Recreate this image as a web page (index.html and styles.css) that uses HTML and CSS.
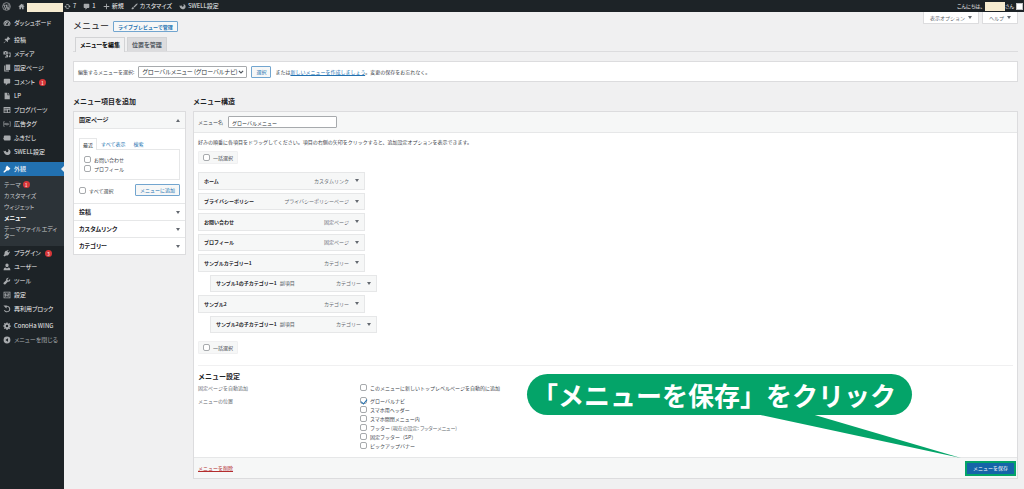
FILE: index.html
```html
<!DOCTYPE html>
<html lang="ja">
<head>
<meta charset="utf-8">
<title>メニュー</title>
<meta name="viewport" content="width=device-width, initial-scale=1">
<link rel="stylesheet" href="styles.css">
</head>
<body>
<svg class="sprite" aria-hidden="true">
  <symbol id="i-wp" viewBox="0 0 20 20"><circle cx="10" cy="10" r="8.6" fill="none" stroke="currentColor" stroke-width="1.6"/><path d="M3.5 7h4M8.500 7h4M4.500 7l3.500 9.500L10.200 10 9 7M10 7l3.500 9.500L16 9.500c.4-1.500-1.500-2.500-1.200-4.300" fill="none" stroke="currentColor" stroke-width="1.900"/></symbol>
  <symbol id="i-home" viewBox="0 0 20 20"><path d="M10 2L1.500 10l1.300 1.300L4 10.200V18h4.500v-5h3v5H16v-7.800l1.200 1.100L18.500 10 15.500 7.200V3.500h-2v1.800z"/></symbol>
  <symbol id="i-update" viewBox="0 0 20 20"><path d="M4.500 11a5.700 5.700 0 0 0 10 2.700M15.500 9a5.700 5.700 0 0 0-10-2.700" fill="none" stroke="currentColor" stroke-width="2.400"/><path d="M1 11.500L4.300 7l3.700 4.500zM19 8.500L15.700 13 12 8.500z"/></symbol>
  <symbol id="i-comment" viewBox="0 0 20 20"><path d="M4 2h12a2 2 0 0 1 2 2v8a2 2 0 0 1-2 2h-4l-5 5v-5H4a2 2 0 0 1-2-2V4a2 2 0 0 1 2-2z"/></symbol>
  <symbol id="i-plus" viewBox="0 0 20 20"><path d="M8.700 2h2.600v6.700H18v2.600h-6.700V18H8.700v-6.700H2V8.700h6.700z"/></symbol>
  <symbol id="i-brush" viewBox="0 0 20 20"><path d="M18.500 1.500c-1-1-2.500 0-4 1.500L7 10.500l2.500 2.500L17 5.500c1.500-1.500 2.500-3 1.500-4zM6 11.500c-3 0-2.500 3.500-5 5.500 3 1.500 7 .5 7.500-3z"/></symbol>
  <symbol id="i-swell" viewBox="0 0 20 20"><path d="M1 7c3 1.500 5 1 6-1 0 3 2 5 4 4.500C14.500 9.500 14 5 12.500 2.500 17.500 3.500 20 8 18.500 12.500 17 17 12 19 8 17 4.500 15.500 2 11.500 1 7z"/></symbol>
  <symbol id="i-dash" viewBox="0 0 20 20"><path fill-rule="evenodd" d="M10 3a8.500 8.500 0 0 0-7.500 12.800c.2.700.8 1.200 1.500 1.200h12c.7 0 1.300-.5 1.500-1.200A8.500 8.500 0 0 0 10 3zM9 5h2v2H9zM4.500 7.500h2v2h-2zM3.500 11.500h2v2h-2zM14.500 11.500h2v2h-2zM14 6l1.200 1.200L12 12a2.200 2.200 0 1 1-2.500-1.200z"/></symbol>
  <symbol id="i-pin" viewBox="0 0 20 20"><path d="M12.500 1.500l6 6-1.500 1-1.500-.3-3.300 3.300c.5 1.700.3 3-.7 4.200L7.900 12.100 2.500 18l-1-1 5.900-5.400-3.600-3.600c1.200-1 2.500-1.200 4.200-.7L11.300 4 11 2.500z"/></symbol>
  <symbol id="i-media" viewBox="0 0 20 20"><path fill-rule="evenodd" d="M1 4h3l1-1.500h3L9 4h3v7H1zm5.500 1.500a2 2 0 1 0 0 4 2 2 0 0 0 0-4zM13.500 6H19v10a2.300 2.300 0 1 1-2-2.300V9h-3.500zM8 12.500h4.500V17a2 2 0 1 1-1.700-2H9.500v2.500A2 2 0 1 1 8 15.600z"/></symbol>
  <symbol id="i-pages" viewBox="0 0 20 20"><path d="M7 1.500h11V15H7zM5.500 4v12.500H15V18.500H3V4z"/></symbol>
  <symbol id="i-doc" viewBox="0 0 20 20"><path d="M4 2h7v6h6v10H4zM12.500 2L17 6.500h-4.500z"/></symbol>
  <symbol id="i-blocks" viewBox="0 0 20 20"><path fill-rule="evenodd" d="M1.500 2.500h17v15h-17zM3.500 6v1.800h13V6zM3.500 9.500v2h7v-2zM12.500 9.500v6h4v-6zM3.500 13v2.500h7V13z"/></symbol>
  <symbol id="i-ad" viewBox="0 0 24 20"><path d="M5 3H2v14h3M19 3h3v14h-3M5 13V8h3v5M10 13V8h4v5h-4M17 8v5" fill="none" stroke="currentColor" stroke-width="1.700"/></symbol>
  <symbol id="i-balloon" viewBox="0 0 20 20"><path d="M4.500 4h12A2.500 2.500 0 0 1 19 6.500v7a2.500 2.500 0 0 1-2.500 2.500h-12A2.500 2.500 0 0 1 2 13.500L.5 11 2 9V6.500A2.500 2.500 0 0 1 4.500 4z"/></symbol>
  <symbol id="i-paint" viewBox="0 0 20 20"><path d="M10 1.500l8.500 7.500-3.800 4.200c-2 1-3.700.3-5 .3L4 18.500c-1.500 1-3.500-1-2.500-2.500L7 10.500c0-1.500-1-3 .2-5z"/></symbol>
  <symbol id="i-plug" viewBox="0 0 20 20"><path d="M12.500 2l1.500 1.500-3 3L13.500 9l3-3L18 7.500l-3 3 1 1c-2.500 4-5.500 5.500-8.500 4.500L4 19l-3-3 3-3.500C3 9.500 4.500 6.500 8.500 4l1 1z"/></symbol>
  <symbol id="i-user" viewBox="0 0 20 20"><path d="M10 1.500a4 4 0 0 1 4 4.500c-.3 2.500-2 4-4 4S6.300 8.500 6 6a4 4 0 0 1 4-4.500zM6 11l4 3 4-3c3 .5 4.500 3 4.500 7h-17c0-4 1.500-6.500 4.500-7z"/></symbol>
  <symbol id="i-tool" viewBox="0 0 20 20"><path d="M17.500 5L14 8.500l-2.500-.5L11 5.500 14.500 2C11 .5 7 3.500 8 8l-6.500 6.500c-1.500 2.500 1.500 5.500 4 4L12 12c4.500 1 7.500-3.500 5.500-7z"/></symbol>
  <symbol id="i-settings" viewBox="0 0 20 20"><path fill-rule="evenodd" d="M1.500 2h17v16h-17zM3.500 4v12h13V4zM5 5.500h2v3h1.500v2H7v4H5v-4H4v-2h1zM9.500 5.500h1.700v5h1v2h-1v2H9.500v-2h-1v-2h1zM13.500 5.500h1.500V7h1v2h-1v5.500h-1.500V9h-1V7h1z"/></symbol>
  <symbol id="i-reuse" viewBox="0 0 20 20"><path d="M5 5a7 7 0 1 1-1.500 8" fill="none" stroke="currentColor" stroke-width="2.600"/><path d="M1 1.500h8V9z"/></symbol>
  <symbol id="i-gear" viewBox="0 0 20 20"><path fill-rule="evenodd" d="M8.500 1h3l.5 2.500 1.500.7 2.200-1.400 2 2-1.400 2.200.7 1.500 2.500.5v3l-2.500.5-.7 1.500 1.400 2.200-2 2-2.200-1.400-1.500.7-.5 2.500h-3L8 17l-1.500-.7-2.200 1.400-2-2 1.400-2.200L3 12l-2.500-.5v-3L3 8l.7-1.500-1.400-2.200 2-2 2.200 1.400L8 3zM10 7a3 3 0 1 0 0 6 3 3 0 0 0 0-6z"/></symbol>
  <symbol id="i-collapse" viewBox="0 0 20 20"><path fill-rule="evenodd" d="M10 1.500a8.500 8.500 0 1 0 0 17 8.500 8.500 0 0 0 0-17zM12.500 5.500v9L6 10z"/></symbol>
  <symbol id="i-chevron" viewBox="0 0 10 10"><path d="M1.500 3L5 6.500 8.500 3" fill="none" stroke="currentColor" stroke-width="2"/></symbol>
</svg>

<header class="adminbar">
  <a class="bar-item" href="#" aria-label="WordPress"><svg class="icon icon-wp"><use href="#i-wp"/></svg></a>
  <a class="bar-item bar-site" href="#" aria-label="サイト"><svg class="icon"><use href="#i-home"/></svg><span class="mask mask-site"></span></a>
  <a class="bar-item" href="#"><svg class="icon"><use href="#i-update"/></svg>7</a>
  <a class="bar-item" href="#"><svg class="icon"><use href="#i-comment"/></svg>1</a>
  <a class="bar-item" href="#"><svg class="icon"><use href="#i-plus"/></svg>新規</a>
  <a class="bar-item" href="#"><svg class="icon"><use href="#i-brush"/></svg>カスタマイズ</a>
  <a class="bar-item" href="#"><svg class="icon"><use href="#i-swell"/></svg>SWELL設定</a>
  <a class="bar-user" href="#">こんにちは、<span class="mask mask-user"></span>さん<span class="avatar"></span></a>
</header>

<div class="layout">
  <nav class="sidebar" aria-label="管理メニュー">
    <ul class="menu">
      <li><a href="#"><svg class="icon"><use href="#i-dash"/></svg>ダッシュボード</a></li>
      <li class="sep"></li>
      <li><a href="#"><svg class="icon"><use href="#i-pin"/></svg>投稿</a></li>
      <li><a href="#"><svg class="icon"><use href="#i-media"/></svg>メディア</a></li>
      <li><a href="#"><svg class="icon"><use href="#i-pages"/></svg>固定ページ</a></li>
      <li><a href="#"><svg class="icon"><use href="#i-comment"/></svg>コメント<span class="count">1</span></a></li>
      <li><a href="#"><svg class="icon"><use href="#i-doc"/></svg>LP</a></li>
      <li><a href="#"><svg class="icon"><use href="#i-blocks"/></svg>ブログパーツ</a></li>
      <li><a href="#"><svg class="icon"><use href="#i-ad"/></svg>広告タグ</a></li>
      <li><a href="#"><svg class="icon"><use href="#i-balloon"/></svg>ふきだし</a></li>
      <li><a href="#"><svg class="icon"><use href="#i-swell"/></svg>SWELL設定</a></li>
      <li class="sep"></li>
      <li class="current"><a href="#"><svg class="icon"><use href="#i-paint"/></svg>外観</a>
        <ul class="submenu">
          <li><a href="#">テーマ<span class="count">1</span></a></li>
          <li><a href="#">カスタマイズ</a></li>
          <li><a href="#">ウィジェット</a></li>
          <li><a class="active" href="#">メニュー</a></li>
          <li><a href="#">テーマファイルエディター</a></li>
        </ul>
      </li>
      <li><a href="#"><svg class="icon"><use href="#i-plug"/></svg>プラグイン<span class="count">3</span></a></li>
      <li><a href="#"><svg class="icon"><use href="#i-user"/></svg>ユーザー</a></li>
      <li><a href="#"><svg class="icon"><use href="#i-tool"/></svg>ツール</a></li>
      <li><a href="#"><svg class="icon"><use href="#i-settings"/></svg>設定</a></li>
      <li><a href="#"><svg class="icon"><use href="#i-reuse"/></svg>再利用ブロック</a></li>
      <li class="sep"></li>
      <li><a href="#"><svg class="icon"><use href="#i-gear"/></svg>ConoHa WING</a></li>
      <li><button class="collapse" type="button"><svg class="icon"><use href="#i-collapse"/></svg>メニューを閉じる</button></li>
    </ul>
  </nav>

  <main class="content">
    <div class="page-head">
      <h1 class="title">メニュー</h1>
      <a class="btn btn-title" href="#">ライブプレビューで管理</a>
      <div class="screen-meta">
        <button class="meta-btn" type="button">表示オプション<span class="tri"></span></button>
        <button class="meta-btn" type="button">ヘルプ<span class="tri"></span></button>
      </div>
    </div>
    <nav class="tabs" aria-label="メニュータブ">
      <a class="tab tab-active" href="#">メニューを編集</a>
      <a class="tab" href="#">位置を管理</a>
    </nav>

    <form class="manage">
      <label for="menu-select">編集するメニューを選択:</label>
      <span class="select-wrap">
        <select class="field menu-select" id="menu-select"><option>グローバルメニュー (グローバルナビ)</option></select>
        <svg class="chevron" aria-hidden="true"><use href="#i-chevron"/></svg>
      </span>
      <button class="btn" type="button">選択</button>
      <span class="manage-note">または<a class="link" href="#">新しいメニューを作成しましょう</a>。変更の保存をお忘れなく。</span>
    </form>

    <div class="columns">
      <section class="col-left">
        <h2 class="heading">メニュー項目を追加</h2>
        <div class="accordion">
          <h3 class="acc-title acc-open">固定ページ<span class="tri tri-up"></span></h3>
          <div class="acc-body">
            <div class="mini-tabs">
              <a class="mini-tab mini-active" href="#">最近</a>
              <a class="mini-tab" href="#">すべて表示</a>
              <a class="mini-tab" href="#">検索</a>
            </div>
            <div class="mini-panel">
              <label class="check"><input type="checkbox">お問い合わせ</label>
              <label class="check"><input type="checkbox">プロフィール</label>
            </div>
            <div class="acc-actions">
              <label class="check"><input type="checkbox">すべて選択</label>
              <button class="btn btn-add" type="button">メニューに追加</button>
            </div>
          </div>
          <h3 class="acc-title">投稿<span class="tri"></span></h3>
          <h3 class="acc-title">カスタムリンク<span class="tri"></span></h3>
          <h3 class="acc-title">カテゴリー<span class="tri"></span></h3>
        </div>
      </section>

      <section class="col-right">
        <h2 class="heading">メニュー構造</h2>
        <form class="frame">
          <div class="frame-head">
            <label for="menu-name">メニュー名</label>
            <input class="field menu-name" id="menu-name" type="text" value="グローバルメニュー">
          </div>
          <div class="frame-body">
            <p class="hint">好みの順番に各項目をドラッグしてください。項目の右側の矢印をクリックすると、追加設定オプションを表示できます。</p>
            <label class="check bulk"><input type="checkbox">一括選択</label>
            <ul class="items">
              <li class="item"><b>ホーム</b><span class="kind">カスタムリンク</span><span class="tri"></span></li>
              <li class="item"><b>プライバシーポリシー</b><span class="kind">プライバシーポリシーページ</span><span class="tri"></span></li>
              <li class="item"><b>お問い合わせ</b><span class="kind">固定ページ</span><span class="tri"></span></li>
              <li class="item"><b>プロフィール</b><span class="kind">固定ページ</span><span class="tri"></span></li>
              <li class="item"><b>サンプルカテゴリー1</b><span class="kind">カテゴリー</span><span class="tri"></span></li>
              <li class="item item-child"><b>サンプル1の子カテゴリー1</b><span class="sub">副項目</span><span class="kind">カテゴリー</span><span class="tri"></span></li>
              <li class="item"><b>サンプル2</b><span class="kind">カテゴリー</span><span class="tri"></span></li>
              <li class="item item-child"><b>サンプル2の子カテゴリー1</b><span class="sub">副項目</span><span class="kind">カテゴリー</span><span class="tri"></span></li>
            </ul>
            <label class="check bulk"><input type="checkbox">一括選択</label>
            <div class="settings">
              <h3 class="heading">メニュー設定</h3>
              <div class="setting">
                <span class="setting-name">固定ページを自動追加</span>
                <div class="options">
                  <label class="check"><input type="checkbox">このメニューに新しいトップレベルページを自動的に追加</label>
                </div>
              </div>
              <div class="setting">
                <span class="setting-name">メニューの位置</span>
                <div class="options">
                  <label class="check"><input type="checkbox" checked>グローバルナビ</label>
                  <label class="check"><input type="checkbox">スマホ用ヘッダー</label>
                  <label class="check"><input type="checkbox">スマホ開閉メニュー内</label>
                  <label class="check"><input type="checkbox">フッター<small class="note">(現在の設定: フッターメニュー)</small></label>
                  <label class="check"><input type="checkbox">固定フッター（SP）</label>
                  <label class="check"><input type="checkbox">ピックアップバナー</label>
                </div>
              </div>
            </div>
          </div>
          <div class="frame-foot">
            <a class="delete" href="#">メニューを削除</a>
            <div class="save-wrap">
              <button class="save" type="button">メニューを保存</button>
              <div class="callout">
                <p class="callout-text">「メニューを保存」をクリック</p>
                <svg class="callout-tail" viewBox="0 0 210 45" aria-hidden="true"><path d="M0 0h57L210 45z"/></svg>
              </div>
            </div>
          </div>
        </form>
      </section>
    </div>
  </main>
</div>
</body>
</html>
```
FILE: styles.css
```css
* { box-sizing: border-box; }

body {
  margin: 0;
  min-height: 100vh;
  display: flex;
  flex-direction: column;
  background: #f0f0f1;
  color: #3c434a;
  font: 5px/8px "Noto Sans CJK JP", sans-serif;
}

h1, h2, h3, p, ul { margin: 0; padding: 0; }
ul { list-style: none; }
a { color: inherit; text-decoration: none; }
button, input, select { font: inherit; color: inherit; margin: 0; }

.sprite { position: absolute; width: 0; height: 0; }
.icon { width: 8px; height: 8px; flex: none; fill: currentColor; }

/* Slightly larger interface text with proportional kana */
.adminbar, .sidebar, .collapse, .tab, .menu-select, .acc-title {
  font-size: 6px;
  font-feature-settings: "palt";
}

/* Admin bar */
.adminbar {
  display: flex;
  align-items: center;
  gap: 7px;
  height: 12px;
  padding: 0 1px 0 2px;
  background: #1d2327;
  color: #f0f0f1;
}
.adminbar .icon { width: 7px; height: 7px; color: #a7aaad; }
.adminbar .icon-wp { width: 9px; height: 9px; }
.bar-item { display: flex; align-items: center; gap: 2px; }
.bar-site { margin-right: -6px; }
.mask { background: #f6ebd0; }
.mask-site { width: 36px; height: 9px; margin-top: 3px; }
.bar-user { display: flex; align-items: center; margin-left: auto; font-size: 5px; }
.mask-user { width: 20px; height: 9px; margin-left: 2px; }
.avatar { width: 7px; height: 7px; margin-left: 2px; background: #fff; border: 1px solid #c3c4c7; }

/* Sidebar */
.layout { display: flex; flex: 1; }
.sidebar { width: 64px; flex: none; padding-top: 4px; background: #1d2327; color: #f0f0f1; }
.menu > li > a, .collapse {
  display: flex;
  align-items: center;
  gap: 3px;
  width: 100%;
  height: 14px;
  padding: 0 3px;
  white-space: nowrap;
}
.menu .icon { color: #a7aaad; }
.menu .sep { height: 3px; }
.collapse { border: 0; background: none; color: #a7aaad; }
.menu .current > a { background: #2271b1; color: #fff; }
.current > a .icon { color: #fff; }
.current > a::after {
  content: "";
  margin: 0 -3px 0 auto;
  border: 3px solid transparent;
  border-right-color: #f0f0f1;
}
.submenu { padding: 3px 4px 5px; background: #2c3338; color: #c3c4c7; }
.submenu a { display: flex; align-items: center; padding: 2px 0; line-height: 7px; }
.submenu .active { color: #fff; font-weight: 700; }
.count {
  width: 7px;
  height: 7px;
  margin-left: 1px;
  border-radius: 50%;
  background: #d63638;
  color: #fff;
  font-size: 5px;
  line-height: 7px;
  text-align: center;
}
.submenu .count { margin: 0 0 0 2px; }

/* Page header */
.content { flex: 1; min-width: 0; padding: 0 6px 10px 9px; }
.page-head { display: flex; align-items: center; gap: 4px; height: 25px; padding-top: 3px; }
.title { font-size: 9px; line-height: 12px; font-weight: 400; color: #1d2327; }
.btn {
  height: 12px;
  padding: 0 4px;
  border: 1px solid #72a5cf;
  border-radius: 1px;
  background: #f6f7f7;
  color: #2271b1;
  line-height: 10px;
  white-space: nowrap;
}
.btn-title { height: 11px; line-height: 9px; font-weight: 700; }
.screen-meta { display: flex; align-self: flex-start; gap: 3px; margin: -3px 0 0 auto; }
.meta-btn {
  display: flex;
  align-items: center;
  gap: 3px;
  height: 12px;
  padding: 0 6px;
  border: 1px solid #dcdcde;
  border-top: 0;
  border-radius: 0 0 1px 1px;
  background: #fff;
  color: #646970;
}
.tri { flex: none; border: 2px solid transparent; border-top: 3px solid #646970; border-bottom: 0; }
.tri-up { border-top: 0; border-bottom: 3px solid #646970; }

.tabs { display: flex; gap: 2px; padding-left: 2px; border-bottom: 1px solid #dcdcde; }
.tab {
  height: 14px;
  padding: 0 4px;
  border: 1px solid #d2d3d5;
  border-bottom: 0;
  background: #dcdcde;
  color: #50575e;
  font-weight: 700;
  line-height: 13px;
}
.tab-active { height: 15px; margin-bottom: -1px; background: #f0f0f1; color: #000; }

/* Menu picker */
.manage {
  display: flex;
  align-items: center;
  gap: 4px;
  height: 21px;
  margin-top: 9px;
  padding: 0 4px;
  border: 1px solid #dcdcde;
  background: #fff;
}
.field {
  height: 12px;
  padding: 0 3px;
  border: 1px solid #a7aaad;
  border-radius: 1px;
  background: #fff;
  color: #2c3338;
}
.select-wrap { position: relative; display: flex; }
.menu-select { width: 109px; appearance: none; }
.chevron { position: absolute; top: 3px; right: 3px; width: 6px; height: 6px; pointer-events: none; color: #50575e; }
.link { color: #2271b1; text-decoration: underline; }

/* Columns */
.columns { display: flex; gap: 7px; margin-top: 14px; }
.col-left { width: 113px; flex: none; }
.col-right { flex: 1; min-width: 0; }
.heading { font-size: 7px; line-height: 10px; font-weight: 700; color: #1d2327; }
.col-left .heading, .col-right > .heading { margin-bottom: 5px; }

.check { display: flex; align-items: center; gap: 3px; line-height: 9px; }
.check input {
  appearance: none;
  width: 7px;
  height: 7px;
  border: 1px solid #a7aaad;
  border-radius: 2px;
  background: #fff;
}
.check input:checked::before {
  content: "";
  display: block;
  width: 3px;
  height: 5px;
  margin: 0 0 0 1px;
  border: solid #2271b1;
  border-width: 0 1px 1px 0;
  transform: rotate(40deg);
}

/* Accordion */
.accordion { border: 1px solid #dcdcde; background: #fff; }
.acc-title {
  display: flex;
  align-items: center;
  justify-content: space-between;
  height: 17px;
  padding: 0 5px;
  border-top: 1px solid #e6e7e8;
  color: #1d2327;
}
.acc-open { border-top: 0; border-bottom: 1px solid #e6e7e8; background: #f6f7f7; }
.acc-body { padding: 9px 5px 7px; }
.mini-tabs { display: flex; }
.mini-tab { height: 11px; padding: 0 4px; color: #2271b1; line-height: 11px; }
.mini-active {
  height: 12px;
  padding: 0 3px;
  margin-bottom: -1px;
  border: 1px solid #e6e7e8;
  border-bottom: 0;
  background: #fff;
  color: #2c3338;
}
.mini-panel { padding: 5px 4px 6px; border: 1px solid #e6e7e8; }
.acc-actions { display: flex; align-items: center; justify-content: space-between; margin-top: 4px; }

/* Menu structure */
.frame { border: 1px solid #dcdcde; background: #fff; }
.frame-head {
  display: flex;
  align-items: center;
  gap: 5px;
  height: 21px;
  padding: 0 4px;
  border-bottom: 1px solid #e6e7e8;
  background: #f6f7f7;
}
.menu-name { width: 109px; }
.frame-body { padding: 5px 4px 3px; }
.bulk {
  width: fit-content;
  height: 13px;
  padding: 0 4px;
  border: 1px solid #f0f0f1;
  border-radius: 1px;
  background: #f6f7f7;
}
.hint { margin-bottom: 5px; }
.items { display: grid; grid-auto-rows: 1fr; gap: 3px; width: 167px; min-height: 161px; margin: 8px 0; }
.item {
  display: flex;
  align-items: center;
  padding: 0 5px;
  border: 1px solid #e6e7e8;
  background: #f6f7f7;
}
.item b { color: #1d2327; }
.item .sub { margin-left: 3px; color: #50575e; }
.item .kind { margin: 0 6px 0 auto; color: #646970; }
.item-child { margin: 0 -12px 0 12px; }

/* Menu settings */
.settings { margin-top: 11px; padding-top: 5px; border-top: 1px solid #f0f0f1; }
.setting { display: flex; margin-bottom: 4px; }
.setting .setting-name { width: 162px; flex: none; color: #646970; line-height: 9px; }
.settings .heading { margin-bottom: 2px; }
.note { color: #646970; font-size: 5px; margin-left: -2px; font-feature-settings: "palt"; }

.frame-foot {
  display: flex;
  align-items: center;
  justify-content: space-between;
  height: 21px;
  padding: 0 1px 0 4px;
  border-top: 1px solid #e6e7e8;
  background: #f6f7f7;
}
.delete { color: #b32d2e; text-decoration: underline; }
.save-wrap { position: relative; }
.save {
  display: block;
  height: 15px;
  padding: 0 8px;
  border: 0;
  outline: 2px solid #04a469;
  outline-offset: -2px;
  background: #1565a8;
  color: #fff;
}

/* Callout over the page, anchored to the save button */
.callout { position: absolute; right: 104px; bottom: 61px; }
.callout-text {
  padding: 0 16px 0 5px;
  border-radius: 21px;
  background: #04a469;
  color: #fff;
  font-size: 26px;
  font-weight: 700;
  line-height: 41px;
  white-space: nowrap;
}
.callout-tail { position: absolute; top: 39px; left: 224px; width: 210px; height: 45px; fill: #04a469; }
```
